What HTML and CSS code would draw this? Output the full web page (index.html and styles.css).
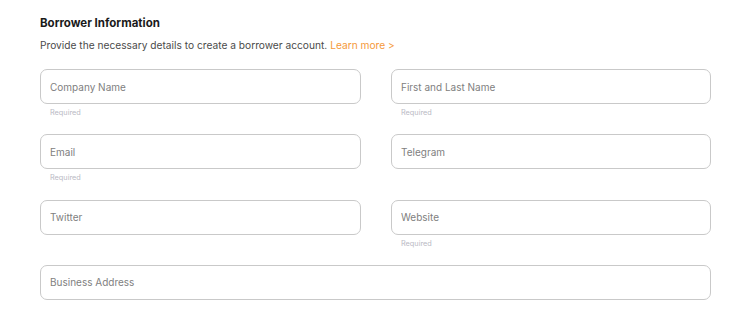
FILE: index.html
```html
<!DOCTYPE html>
<html lang="en">
<head>
    <meta charset="UTF-8">
    <meta name="viewport" content="width=device-width, initial-scale=1.0">
    <title>Borrower Information</title>
    <link rel="stylesheet" href="styles.css">
</head>
<body>
    <section class="borrower-form">
        <h2 class="form-title">Borrower Information</h2>
        <p class="form-desc">Provide the necessary details to create a borrower account. <a href="#" class="learn-more">Learn more &gt;</a></p>

        <div class="field-grid">
            <div class="field">
                <input type="text" class="input" placeholder="Company Name">
                <span class="hint">Required</span>
            </div>
            <div class="field">
                <input type="text" class="input" placeholder="First and Last Name">
                <span class="hint">Required</span>
            </div>
            <div class="field">
                <input type="email" class="input" placeholder="Email">
                <span class="hint">Required</span>
            </div>
            <div class="field">
                <input type="text" class="input" placeholder="Telegram">
            </div>
            <div class="field">
                <input type="text" class="input" placeholder="Twitter">
            </div>
            <div class="field">
                <input type="text" class="input" placeholder="Website">
                <span class="hint">Required</span>
            </div>
            <div class="field field-wide">
                <input type="text" class="input" placeholder="Business Address">
            </div>
        </div>
    </section>
</body>
</html>
```

FILE: styles.css
```css
:root {
    --text-color: #1a1a1a;
    --muted: #4a4a4a;
    --accent: #f5993a;
    --border: #c9c9c9;
    --placeholder: #808080;
    --hint: #b9b9c4;
}

* {
    margin: 0;
    padding: 0;
    box-sizing: border-box;
}

body {
    font-family: 'Inter', 'Liberation Sans', sans-serif;
    background: #ffffff;
    color: var(--text-color);
    padding: 16px 19px 0 40px;
}

.form-title {
    font-size: 11.5px;
    font-weight: 700;
    line-height: 14px;
}

.form-desc {
    margin-top: 8px;
    font-size: 10.2px;
    line-height: 14px;
    color: var(--muted);
}

.learn-more {
    color: var(--accent);
    text-decoration: none;
}

.field-grid {
    margin-top: 17px;
    display: grid;
    grid-template-columns: 321px 320px;
    column-gap: 30px;
}

.field {
    height: 65.33px;
    display: flex;
    flex-direction: column;
}

.field-wide {
    grid-column: 1 / -1;
}

.input {
    width: 100%;
    height: 35px;
    border: 1px solid var(--border);
    border-radius: 7px;
    padding: 0 9px;
    font-family: inherit;
    font-size: 10px;
    color: var(--text-color);
    background: #fff;
    outline: none;
}

.input::placeholder {
    color: var(--placeholder);
}

.hint {
    margin-top: 4px;
    padding-left: 10px;
    font-size: 7.3px;
    line-height: 10px;
    color: var(--hint);
}
```
